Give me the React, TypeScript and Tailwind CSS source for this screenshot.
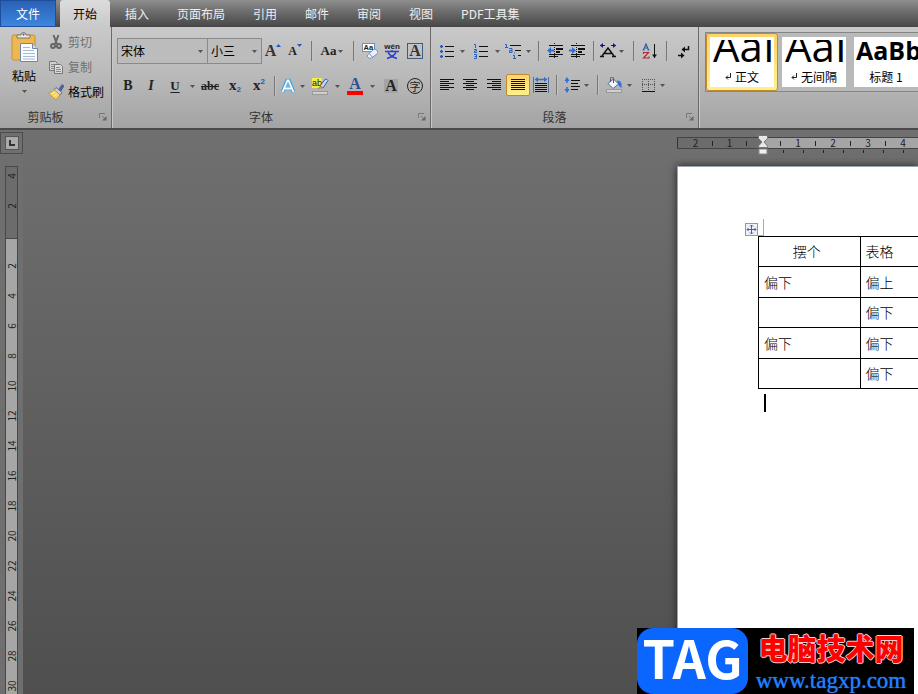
import { type ReactNode } from "react"
import clsx from "clsx"

const tabs = ["插入", "页面布局", "引用", "邮件", "审阅", "视图", "PDF工具集"]

const rows = [
  ["摆个", "表格"],
  ["偏下", "偏上"],
  ["", "偏下"],
  ["偏下", "偏下"],
  ["", "偏下"],
]

const verticalMarks = [2, 4, 6, 8, 10, 12, 14, 16, 18, 20, 22, 24, 26, 28, 30]

interface IconProps {
  children: ReactNode
  className?: string
  box?: string
}

function Icon({ children, className = "size-4", box = "0 0 16 16" }: IconProps) {
  return (
    <svg viewBox={box} className={clsx("shrink-0", className)} fill="none" aria-hidden="true">
      {children}
    </svg>
  )
}

interface ToolProps {
  label: string
  width: string
  children: ReactNode
  active?: boolean
}

function Tool({ label, width, children, active }: ToolProps) {
  return (
    <button
      type="button"
      aria-label={label}
      className={clsx(
        "flex h-[22px] shrink-0 items-center justify-center",
        width,
        active && "rounded-[2px] border border-[#c28a30] bg-linear-to-b from-[#fcd46a] to-[#fff08c]"
      )}
    >
      {children}
    </button>
  )
}

function Caret() {
  return (
    <Icon box="0 0 5 3" className="h-[3px] w-[5px]">
      <path d="M0 0h5L2.5 3z" fill="#555" />
    </Icon>
  )
}

function Drop({ label, width = "w-[5px]" }: { label: string; width?: string }) {
  return (
    <button type="button" aria-label={label} className={clsx("flex h-[22px] shrink-0 items-center justify-center", width)}>
      <Caret />
    </button>
  )
}

function Divider({ width }: { width: string }) {
  return (
    <span className={clsx("flex shrink-0 justify-center", width)}>
      <span className="h-5 w-px bg-[#777] shadow-[1px_0_0_#c4c4c4]" />
    </span>
  )
}

// Ribbon group with its caption and dialog launcher
function Group({ title, width, children }: { title: string; width: string; children: ReactNode }) {
  return (
    <section className={clsx("flex shrink-0 flex-col border-r border-[#6a6a6a] shadow-[1px_0_0_#c8c8c8]", width)}>
      <div className="h-[79px]">{children}</div>
      <div className="flex h-[22px] items-center pr-1 text-[#333]">
        <span className="flex-1 pr-2 text-center">{title}</span>
        <button type="button" aria-label={title + "设置"}>
          <Icon box="0 0 8 8" className="size-2">
            <path d="M.5 5V.5H6" stroke="#777" />
            <path d="M3 3l3 3" stroke="#777" />
            <path d="M7.5 3v4.500H3z" fill="#666" />
          </Icon>
        </button>
      </div>
    </section>
  )
}

function Lines({ d }: { d: string }) {
  return <path d={d} stroke="#111" shapeRendering="crispEdges" />
}

function ClipboardGroup() {
  return (
    <Group title="剪贴板" width="w-28">
      <div className="flex">
        <button type="button" className="flex w-12 flex-col items-center pt-[5px]">
          <Icon box="0 0 27 30" className="h-[30px] w-[27px]">
            <rect x="1" y="3" width="23" height="25" rx="2" fill="#eeb750" stroke="#c98f34" />
            <path d="M6 6V3h4a2.500 2.500 0 0 1 5 0h4v3z" fill="#e8e8e8" stroke="#777" />
            <circle cx="12.500" cy="2.500" r="1" fill="#555" />
            <path d="M9.500 11.500h12l5 5v13h-17z" fill="#f8fbff" stroke="#6f86a8" />
            <path d="M21.500 11.500v5h5" fill="#cfdbea" stroke="#6f86a8" />
            <path d="M12 15.500h7M12 18.500h11M12 21.500h12M12 24.500h12M12 27h12" stroke="#a9bad2" />
          </Icon>
          <span className="mt-1 leading-5">粘贴</span>
          <span className="mt-1">
            <Caret />
          </span>
        </button>
        <div className="flex flex-col pt-0.5">
          <button type="button" className="flex h-[25px] items-center gap-1 text-[#707070]">
            <Icon>
              <path d="M5.500 1l3.500 9M10.500 1L7 10" stroke="#666" strokeWidth="2" />
              <circle cx="5" cy="12" r="2" stroke="#666" strokeWidth="2" />
              <circle cx="11" cy="12" r="2" stroke="#666" strokeWidth="2" />
            </Icon>
            剪切
          </button>
          <button type="button" className="flex h-[25px] items-center gap-1 text-[#707070]">
            <Icon>
              <path d="M1.500 2.500h6l2 2v7h-8z" fill="#d0d0d0" stroke="#777" />
              <path d="M3 5.500h4M3 7.500h4M3 9.500h3" stroke="#888" />
              <path d="M6.500 5.500h6l2 2v7h-8z" fill="#dcdcdc" stroke="#777" />
              <path d="M8 8.500h4M8 10.500h5M8 12.500h5" stroke="#888" />
            </Icon>
            复制
          </button>
          <button type="button" className="flex h-[25px] items-center gap-1">
            <Icon>
              <path d="M11 5l3-4.500L16 2l-3 5z" fill="#5460a8" stroke="#344078" strokeWidth=".5" />
              <path d="M8 3.500l6 5-2 2.500-6-5z" fill="#c9d0e4" stroke="#556" strokeWidth=".8" />
              <path d="M6 5.500l6 5.500-4 5c-1-1.500-2-2-3-3C3.500 12 2 11 .5 9 3 9 4.500 8 6 5.500z" fill="#f3d35c" stroke="#b08a24" strokeWidth=".6" />
              <path d="M3 10l4-2M5.500 12.500l4-3" stroke="#fff3b0" />
            </Icon>
            格式刷
          </button>
        </div>
      </div>
    </Group>
  )
}

function FontGroup() {
  return (
    <Group title="字体" width="w-[319px]">
      <div className="mt-[11px] flex h-[26px] items-center pl-[5px]">
        <label className="relative flex items-center">
          <select aria-label="字体名称" className="h-[26px] w-[91px] appearance-none border border-[#8a8a8a] bg-[#bcbcbc] pl-[3px] text-xs">
            <option>宋体</option>
          </select>
          <span className="pointer-events-none absolute right-[5px]">
            <Caret />
          </span>
        </label>
        <label className="relative flex items-center">
          <select aria-label="字号" className="h-[26px] w-[54px] appearance-none border border-l-0 border-[#8a8a8a] bg-[#bcbcbc] pl-[3px] text-xs">
            <option>小三</option>
          </select>
          <span className="pointer-events-none absolute right-[5px]">
            <Caret />
          </span>
        </label>
        <Tool label="增大字体" width="w-[22px]">
          <span className="font-['Liberation_Serif',serif] text-base font-bold text-[#333]">A</span>
          <Icon box="0 0 5 14" className="h-3.5 w-[5px]">
            <path d="M0 3h5L2.500 0z" fill="#2458b8" />
          </Icon>
        </Tool>
        <Tool label="缩小字体" width="w-[22px]">
          <span className="font-['Liberation_Serif',serif] text-xs font-bold text-[#222]">A</span>
          <Icon box="0 0 5 14" className="h-3.5 w-[5px]">
            <path d="M0 0h5L2.500 3z" fill="#2458b8" />
          </Icon>
        </Tool>
        <Divider width="w-2.5" />
        <Tool label="更改大小写" width="w-8">
          <span className="mr-0.5 font-['Liberation_Serif',serif] text-[13px] font-bold text-[#222]">Aa</span>
          <Caret />
        </Tool>
        <Divider width="w-2.5" />
        <Tool label="清除格式" width="w-[23px]">
          <Icon>
            <rect x=".5" y=".5" width="12" height="8" fill="#fff" stroke="#6f8fb8" />
            <text x="1.500" y="7" fontSize="7.500" fontWeight="bold" fill="#222" fontFamily="Liberation Sans">Aa</text>
            <path d="M5.500 12l6-5.500q2-1 3.500 1t.5 3l-6 4.500q-2 1-3.500-.5t-.5-2.500z" fill="#eef3fb" stroke="#6f8fc0" />
            <path d="M7.500 10.500l3 4" stroke="#6f8fc0" />
          </Icon>
        </Tool>
        <Tool label="拼音指南" width="w-[22px]">
          <Icon box="0 0 18 18" className="size-[18px]">
            <text x="9" y="7" fontSize="8" fontWeight="bold" fill="#222" textAnchor="middle" fontFamily="Liberation Sans">wén</text>
            <path d="M2 9.500h14M9 8v2M5 10.500c2 3 5 5 9 6M13 10.500c-2 3-5 5-9 6" stroke="#2740d0" strokeWidth="1.500" />
          </Icon>
        </Tool>
        <Tool label="字符边框" width="w-6">
          <span className="flex size-4 items-center justify-center border border-[#3f5c7c] font-['Liberation_Serif',serif] text-base leading-none font-bold text-[#333]">A</span>
        </Tool>
      </div>
      <div className="mt-[11px] flex h-[22px] items-center pl-[5px] font-['Liberation_Serif',serif] text-[#222]">
        <Tool label="加粗" width="w-[22px]">
          <span className="text-sm font-bold">B</span>
        </Tool>
        <Tool label="倾斜" width="w-6">
          <span className="text-sm font-bold italic">I</span>
        </Tool>
        <Tool label="下划线" width="w-6">
          <span className="text-[13px] font-bold underline underline-offset-2">U</span>
        </Tool>
        <Drop label="下划线样式" width="w-2.5" />
        <Tool label="删除线" width="w-[26px]">
          <span className="text-xs font-bold line-through">abc</span>
        </Tool>
        <Tool label="下标" width="w-6">
          <span className="text-[15px] font-bold">x</span>
          <span className="mt-2 font-['Liberation_Sans',sans-serif] text-[8px] font-bold text-[#2458b8]">2</span>
        </Tool>
        <Tool label="上标" width="w-6">
          <span className="text-[15px] font-bold">x</span>
          <span className="mb-2 font-['Liberation_Sans',sans-serif] text-[8px] font-bold text-[#2458b8]">2</span>
        </Tool>
        <Divider width="w-1.5" />
        <Tool label="文本效果" width="w-[22px]">
          <Icon box="0 0 18 18" className="size-[18px]">
            <path d="M3.500 15L8 3.500h2L14.500 15M5.500 11.500h7" stroke="#7cc4ea" strokeWidth="5" strokeLinejoin="round" opacity=".55" />
            <path d="M3.500 15L8 3.500h2L14.500 15M5.500 11.500h7" stroke="#4a9fd4" strokeWidth="3.500" strokeLinejoin="round" />
            <path d="M3.500 15L8.500 3.500h1L14.500 15M5.500 11.500h7" stroke="#f6fbff" strokeWidth="1.800" />
          </Icon>
        </Tool>
        <Drop label="文本效果选项" width="w-[7px]" />
        <Tool label="突出显示" width="w-7">
          <Icon box="0 0 17 17" className="size-[17px]">
            <rect x="0" y="0" width="10" height="10" fill="#f4ee4c" />
            <text x="0" y="8" fontSize="9" fill="#111" fontFamily="Liberation Sans">ab</text>
            <path d="M8 8l5-6.500q2-1 3 1L11 10z" fill="#c4d6f0" stroke="#3f62a0" />
            <path d="M8 8l3 2-6 1.500z" fill="#c2962a" />
            <rect x=".5" y="13.500" width="15" height="3" fill="#d0d0d0" stroke="#999" />
          </Icon>
        </Tool>
        <Drop label="突出显示颜色" width="w-[7px]" />
        <Tool label="字体颜色" width="w-7">
          <span className="flex w-4 flex-col items-center border-b-4 border-[#f00] text-base leading-[14px] font-bold text-[#2c4f92]">A</span>
        </Tool>
        <Drop label="选择字体颜色" width="w-[7px]" />
        <Tool label="字符底纹" width="w-[30px]">
          <span className="bg-[#a4a4a4] px-px text-base leading-[14px] font-bold">A</span>
        </Tool>
        <Tool label="带圈字符" width="w-[18px]">
          <span className="flex size-4 shrink-0 items-center justify-center rounded-full border border-[#222] font-['Noto_Sans_CJK_SC',sans-serif] text-[11px] leading-none">字</span>
        </Tool>
      </div>
    </Group>
  )
}

function IndentLines() {
  return (
    <>
      <Lines d="M2 2.500h14M9 5.500h7M9 6.500h7M9 8.500h4M9 9.500h4M2 11.500h14M2 13.500h9" />
      <path d="M7.500 0v16" stroke="#222" strokeDasharray="1 1" shapeRendering="crispEdges" />
    </>
  )
}

function ParagraphGroup() {
  return (
    <Group title="段落" width="w-[268px]">
      <div className="mt-[13px] flex h-[22px] items-center pl-[5px]">
        <Tool label="项目符号" width="w-[22px]">
          <Icon>
            <Lines d="M6 3.500h9M6 8.500h9M6 13.500h9" />
            <path d="M1 2h3v3H1zM1 7h3v3H1zM1 12h3v3H1z" fill="#7f9fd8" />
            <path d="M2 2h1v1h1v1H3v1H2V4H1V3h1zM2 7h1v1h1v1H3v1H2V9H1V8h1zM2 12h1v1h1v1H3v1H2v-1H1v-1h1z" fill="#2452b0" />
          </Icon>
        </Tool>
        <Drop label="项目符号库" width="w-[9px]" />
        <Tool label="编号" width="w-7">
          <Icon>
            <Lines d="M6 3.500h9M6 8.500h9M6 13.500h9" />
            <path d="M1 1.500h1.500V5M1 6.500h2.500v1.500H1.500v1.500H4M1 11.500h2.500v4H1M1.500 13.500h2" stroke="#2b5fc0" />
          </Icon>
        </Tool>
        <Drop label="编号库" />
        <Tool label="多级列表" width="w-[26px]">
          <Icon>
            <Lines d="M5 2.500h11M10 7.500h6M13 12.500h3" />
            <path d="M0 1.500h1.500V4M0 4.500h3M4 5.500h3v4H4.500v-2H7M9.500 9.500v1M8 12.500h1.500V15M8 15.500h3" stroke="#2b5fc0" />
          </Icon>
        </Tool>
        <Drop label="列表库" />
        <Divider width="w-3.5" />
        <Tool label="减少缩进量" width="w-5">
          <Icon>
            <IndentLines />
            <path d="M0 7.500L4 4v2.500h3v2H4V11z" fill="#2b6fd8" />
          </Icon>
        </Tool>
        <Tool label="增加缩进量" width="w-6">
          <Icon>
            <IndentLines />
            <path d="M7 7.500L3 4v2.500H0v2h3V11z" fill="#2b6fd8" />
          </Icon>
        </Tool>
        <Divider width="w-2" />
        <Tool label="中文版式" width="w-[22px]">
          <Icon>
            <path d="M0 2.500h5M11 2.500h5" stroke="#14148c" />
            <path d="M3 0v5L0 2.500zM13 0v5l3-2.500z" fill="#14148c" />
            <path d="M2 13L8 5l6 8M4.500 10.500h7" stroke="#111" strokeWidth="1.500" />
            <path d="M0 13.500h4M12 13.500h4" stroke="#111" strokeWidth="1.500" />
          </Icon>
        </Tool>
        <Drop label="中文版式选项" />
        <Divider width="w-[18px]" />
        <Tool label="排序" width="w-4">
          <Icon>
            <path d="M1.500 7L4 1l2.500 6M2 5h4M.5 7h2M5.500 7h2" stroke="#2b5fa8" strokeWidth="1.200" />
            <path d="M1 9.500h5.500l-5 5.500h5.500v-1.500M1.500 9v2" stroke="#b02a30" strokeWidth="1.200" />
            <path d="M12.500 1v14" stroke="#111" shapeRendering="crispEdges" />
            <path d="M10 11.500h5L12.500 15z" fill="#111" />
          </Icon>
        </Tool>
        <Divider width="w-4" />
        <Tool label="显示编辑标记" width="w-[18px]">
          <Icon>
            <path d="M13.500 3v3.500H8" stroke="#111" strokeWidth="1.500" />
            <path d="M10 3.500v6L6.500 6.500z" fill="#111" />
            <path d="M3 12.500h5" stroke="#111" strokeWidth="1.500" />
            <path d="M6 9.500v6l3.500-3z" fill="#111" />
          </Icon>
        </Tool>
      </div>
      <div className="mt-[11px] flex h-[24px] items-center pl-[5px]">
        <Tool label="左对齐" width="w-[22px]">
          <Icon>
            <Lines d="M1 2.500h14M1 4.500h9M1 6.500h14M1 8.500h9M1 10.500h14M1 12.500h9" />
          </Icon>
        </Tool>
        <Tool label="居中" width="w-6">
          <Icon>
            <Lines d="M1 2.500h14M4 4.500h8M1 6.500h14M4 8.500h8M1 10.500h14M4 12.500h8" />
          </Icon>
        </Tool>
        <Tool label="右对齐" width="w-6">
          <Icon>
            <Lines d="M1 2.500h14M6 4.500h9M1 6.500h14M6 8.500h9M1 10.500h14M6 12.500h9" />
          </Icon>
        </Tool>
        <Tool label="两端对齐" width="w-6" active>
          <Icon>
            <Lines d="M1 2.500h14M1 4.500h14M1 6.500h14M1 8.500h14M1 10.500h14M1 12.500h14" />
          </Icon>
        </Tool>
        <Tool label="分散对齐" width="w-[22px]">
          <Icon>
            <path d="M.5 0v16M15.500 0v16" stroke="#56708c" />
            <path d="M3 2.500h10" stroke="#2b6fd8" strokeWidth="1.500" />
            <path d="M5 0v5L1.500 2.500zM11 0v5l3.500-2.500z" fill="#2b6fd8" />
            <Lines d="M2 6.500h12M2 8.500h12M2 10.500h12M2 12.500h12M2 14.500h12" />
          </Icon>
        </Tool>
        <Divider width="w-2" />
        <Tool label="行距" width="w-6">
          <Icon>
            <Lines d="M7 3.500h9M7 6.500h7M7 9.500h9M7 12.500h7" />
            <path d="M3 3v3M3 10v3" stroke="#2b6fd8" strokeWidth="1.500" />
            <path d="M.5 4L3 0l2.500 4zM.5 12L3 16l2.500-4z" fill="#2b6fd8" />
          </Icon>
        </Tool>
        <Drop label="行距选项" />
        <Divider width="w-4" />
        <Tool label="底纹" width="w-[18px]">
          <Icon>
            <path d="M2 6.500L7.500 2l5 5L7 11.500z" fill="#f3f7fd" stroke="#4f6c96" />
            <path d="M7.500 6V1.500a1.500 1.500 0 0 0-3 0V5" stroke="#555" />
            <path d="M11 3.500q4 0 4.500 4V11l-2.500-2z" fill="#2b6fd8" />
            <rect x=".5" y="12.500" width="15" height="3" fill="#d0d0d0" stroke="#999" />
          </Icon>
        </Tool>
        <Drop label="底纹颜色" width="w-[13px]" />
        <Tool label="下框线" width="w-6">
          <Icon>
            <path d="M2 2.500h13M2 7.500h13M2.500 2v11M8.500 2v11M14.500 2v11" stroke="#555" strokeDasharray="1 1" shapeRendering="crispEdges" />
            <Lines d="M2 14.500h13" />
          </Icon>
        </Tool>
        <Drop label="边框选项" />
      </div>
    </Group>
  )
}

function StyleCard({ sample, name, mark, active, bold }: { sample: string; name: string; mark?: boolean; active?: boolean; bold?: boolean }) {
  return (
    <button
      type="button"
      className={clsx(
        "h-[58px] w-[72px] shrink-0 p-[3px]",
        active ? "rounded-[3px] border border-[#c28a30] bg-linear-to-b from-[#fcd46a] to-[#fff08c]" : "border border-transparent"
      )}
    >
      <span className="flex h-full flex-col overflow-hidden bg-white">
        <span
          className={clsx(
            "mt-[3px] flex h-6 shrink-0 items-end overflow-hidden font-['Open_Sans',sans-serif] whitespace-nowrap text-black",
            bold ? "pl-0.5 text-[25px] leading-7 font-bold" : "pl-[3px] text-[42px] leading-9"
          )}
        >
          {sample}
        </span>
        <span className="flex flex-1 items-center justify-center gap-1 pt-[3px] text-xs leading-4">
          {mark && (
            <Icon box="0 0 6 8" className="h-2 w-1.5">
              <path d="M5.500 0v4.500H1M3 2.500l-2 2 2 2" stroke="#222" />
            </Icon>
          )}
          {name}
        </span>
      </span>
    </button>
  )
}

function Ribbon() {
  return (
    <div className="flex h-[101px] shrink-0 overflow-hidden bg-linear-to-b from-[#c9c9c9] via-[#b9b9b9] to-[#a3a3a3] text-black">
      <ClipboardGroup />
      <FontGroup />
      <ParagraphGroup />
      <div className="min-w-0 flex-1 overflow-hidden pt-[5px] pl-1.5">
        <div className="flex h-[60px] w-max border border-[#858585] bg-[#b9b9b9]">
          <StyleCard sample="AaI" name="正文" mark active />
          <StyleCard sample="AaI" name="无间隔" mark />
          <StyleCard sample="AaBb" name="标题 1" bold />
        </div>
      </div>
    </div>
  )
}

function Tick() {
  return (
    <span className="flex w-[17px] shrink-0 justify-center">
      <span className="h-[5px] w-px bg-[#222]" />
    </span>
  )
}

function HorizontalRuler() {
  return (
    <div className="flex flex-1 flex-col pt-[7px] text-[10px] leading-[10px] text-[#222]">
      <div className="flex h-3 items-center border-y border-[#444]">
        <div className="flex h-full w-[86px] shrink-0 items-center justify-end border-l border-[#333] bg-[#6c6c6c] pr-2">
          <span className="w-[17px] text-center">2</span>
          <Tick />
          <span className="w-[17px] text-center">1</span>
          <Tick />
        </div>
        <div className="relative flex h-full flex-1 items-center bg-[#a5a5a5] pl-[9px]">
          <Icon box="0 0 10 20" className="absolute -top-[3px] -left-[5px] h-5 w-2.5">
            <path d="M.5.5h9v3L6 7l3.500 4v1.500h-9V11L4 7 .5 3.500z" fill="#e8e8e8" stroke="#777" />
            <rect x="1" y="14" width="8" height="5" fill="#f0f0f0" stroke="#888" />
          </Icon>
          {[1, 2, 3, 4].map((n) => (
            <span key={n} className="flex shrink-0 items-center">
              <Tick />
              <span className="w-[18px] text-center">{n}</span>
            </span>
          ))}
        </div>
      </div>
      <div className="flex gap-[19px] overflow-hidden pt-px pl-[106px]">
        {[1, 2, 3, 4, 5, 6, 7].map((n) => (
          <span key={n} className="h-[3px] w-px shrink-0 bg-[#222]" />
        ))}
      </div>
    </div>
  )
}

function VerticalNumber({ n }: { n: number }) {
  return (
    <span className="flex h-[30px] shrink-0 items-center justify-center">
      <span className="-rotate-90">{n}</span>
    </span>
  )
}

function VerticalRuler() {
  return (
    <div className="ml-[5px] flex w-[13px] flex-1 flex-col overflow-hidden border border-b-0 border-[#484848] text-[10px] leading-[10px] text-[#222]">
      <div className="flex h-[72px] shrink-0 flex-col justify-end border-b border-[#484848] bg-[#6c6c6c] pb-[17px]">
        <VerticalNumber n={4} />
        <VerticalNumber n={2} />
      </div>
      <div className="flex flex-1 flex-col bg-[#a6a6a6] pt-3">
        {verticalMarks.map((n) => (
          <VerticalNumber key={n} n={n} />
        ))}
      </div>
    </div>
  )
}

function DocumentPage() {
  return (
    <main className="flex-1 border-t border-l border-[#9aa4b4] bg-white pl-[67px] shadow-[0_0_8px_#222]">
      <div className="flex items-end pt-[52px]">
        <button type="button" aria-label="选择表格" className="flex size-[13px] items-center justify-center border border-[#999] bg-[#f0f0f0]">
          <Icon box="0 0 11 11" className="size-[11px]">
            <path d="M5.500 1v9M1 5.500h9M4 2.500L5.500 1 7 2.500M4 8.500L5.500 10 7 8.500M2.500 4L1 5.500 2.500 7M8.500 4L10 5.500 8.500 7" stroke="#2f66c8" />
          </Icon>
        </button>
        <span className="h-[17px] w-[6px] border-r border-b border-[#aaa]" />
      </div>
      <div className="overflow-hidden pl-[13px]">
        <table className="w-[204px] table-fixed border-collapse font-['Noto_Sans_CJK_SC',sans-serif] text-sm leading-5 font-light text-black">
          <tbody>
            {rows.map(([first, second], i) => (
              <tr key={i} className={i % 2 ? "h-[31px]" : "h-[30px]"}>
                <td className={clsx("border border-black pr-[10px] pb-px pl-[5px]", i === 0 && "text-center")}>{first}</td>
                <td className="border border-black pr-[10px] pb-px pl-[5px]">{second}</td>
              </tr>
            ))}
          </tbody>
        </table>
        <div className="mt-[5px] ml-[6px] h-[18px] w-0.5 bg-black" />
      </div>
    </main>
  )
}

function Watermark() {
  return (
    <a href="http://www.tagxp.com" className="absolute right-1 bottom-0 flex h-[66px] w-[277px] items-center bg-black">
      <span className="flex h-[66px] w-[111px] items-center justify-center rounded-[16px] bg-[#0a66ff] pb-2 text-[52px] leading-none font-bold text-white">
        TAG
      </span>
      <span className="flex flex-1 flex-col items-center gap-1 pt-1 whitespace-nowrap">
        <span className="text-[29px] leading-8 font-black text-[#f00] [text-shadow:1px_0_0_#fcc,-1px_0_0_#fcc,0_1px_0_#fcc,0_-1px_0_#fcc]">电脑技术网</span>
        <span className="font-['Liberation_Serif',serif] text-[23px] leading-7 text-[#1f7fff] [text-shadow:0_0_1px_#1f7fff]">www.tagxp.com</span>
      </span>
    </a>
  )
}

export default function App() {
  return (
    <div className="relative flex h-screen flex-col overflow-hidden bg-[#6e6e6e] font-['Noto_Sans_CJK_SC',sans-serif] text-xs">
      <nav className="flex h-[27px] shrink-0 items-center bg-linear-to-b from-[#8e8e8e] via-[#686868] to-[#474747] text-[#eee]">
        <button type="button" className="h-full w-14 border border-[#1d4f9c] bg-linear-to-b from-[#2a61b4] to-[#3d86e0] text-white">文件</button>
        <button type="button" className="ml-1 h-full w-[50px] rounded-t-[3px] bg-linear-to-b from-[#dcdcdc] to-[#c9c9c9] text-black">开始</button>
        <div className="flex gap-7 pl-[15px]">
          {tabs.map((tab) => (
            <button key={tab} type="button">{tab}</button>
          ))}
        </div>
      </nav>
      <Ribbon />
      <div className="flex min-h-0 flex-1 border-t-2 border-[#4a4a4a]">
        <div className="flex w-[23px] shrink-0 flex-col bg-[#6f6f6f]">
          <div className="flex h-9 shrink-0 items-start pt-0.5">
            <button type="button" aria-label="制表符" className="flex h-[22px] w-full items-center justify-center border border-[#4c4c4c]">
              <span className="flex size-[14px] items-center justify-center border border-[#555] bg-[#aaa]">
                <Icon box="0 0 6 6" className="size-1.5">
                  <path d="M1 0v5h5" stroke="#333" strokeWidth="2" />
                </Icon>
              </span>
            </button>
          </div>
          <VerticalRuler />
        </div>
        <div className="flex min-w-0 flex-1 flex-col overflow-hidden bg-linear-to-b from-[#707070] to-[#4f4f4f] pl-[654px]">
          <div className="flex h-9 shrink-0">
            <HorizontalRuler />
          </div>
          <DocumentPage />
        </div>
      </div>
      <Watermark />
    </div>
  )
}
